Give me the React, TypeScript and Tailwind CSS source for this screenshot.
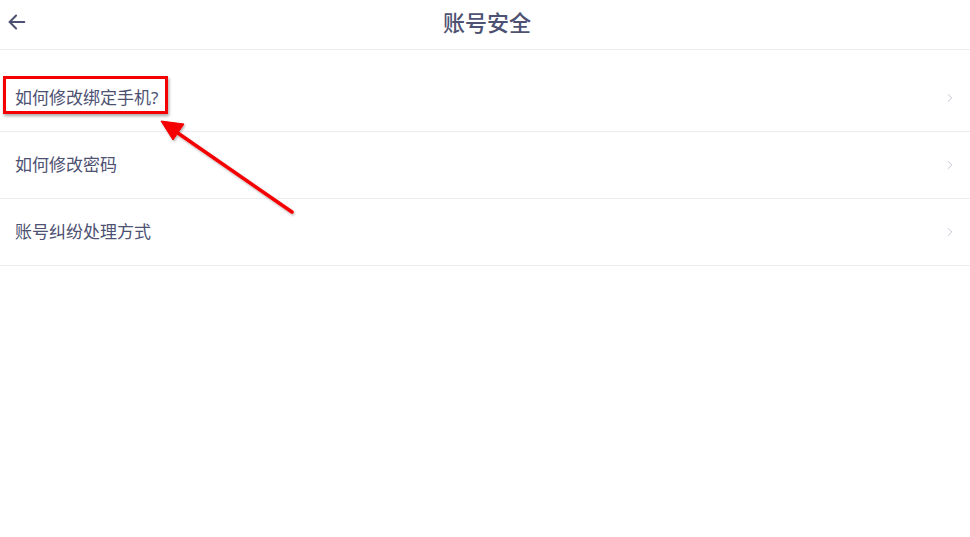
import { ChevronRight } from 'lucide-react';

const items = ['如何修改绑定手机?', '如何修改密码', '账号纠纷处理方式'];

export default function App() {
  return (
    <div
      className="relative w-[970px] h-[537px] bg-white overflow-hidden"
      style={{ fontFamily: '"Noto Sans", "Noto Sans CJK SC", sans-serif' }}
    >
      <header className="relative h-[50px] flex items-center justify-center pb-[5px] border-b border-[#ededf0]">
        <button className="absolute left-[6px] top-[11px] text-[#4d5172]">
          <svg width="22" height="22" viewBox="0 0 24 24" fill="none" stroke="currentColor" strokeWidth="2.2" strokeLinecap="round" strokeLinejoin="round">
            <path d="M20 12H4" />
            <path d="M11 5l-7 7 7 7" />
          </svg>
        </button>
        <h1 className="text-[22px] font-medium text-[#4d5172] pl-[4px]">账号安全</h1>
      </header>

      <ul className="mt-[15px]">
        {items.map((item) => (
          <li
            key={item}
            className="h-[67px] flex items-center justify-between pl-[15px] pr-[13px] border-b border-[#ededf0]"
          >
            <span className="text-[17px] text-[#4d5172]">{item}</span>
            <ChevronRight size={14} strokeWidth={1.5} className="text-[#b8bccb]" />
          </li>
        ))}
      </ul>

      {/* annotation */}
      <div className="absolute left-[3px] top-[76px] w-[165px] h-[38px] border-[3px] border-[#f40000] shadow-[1px_2px_3px_rgba(0,0,0,0.35)]" />
      <svg className="absolute left-0 top-0 pointer-events-none" width="970" height="537">
        <defs>
          <filter id="sh" x="-20%" y="-20%" width="140%" height="140%">
            <feDropShadow dx="1" dy="1.5" stdDeviation="1.2" floodColor="#000" floodOpacity="0.3" />
          </filter>
        </defs>
        <g filter="url(#sh)" fill="#f40000" stroke="#f40000">
          <line x1="292" y1="212" x2="172" y2="129" strokeWidth="3.5" strokeLinecap="round" />
          <polygon points="161,121 184,124 173,140" strokeWidth="1" strokeLinejoin="round" />
        </g>
      </svg>
    </div>
  );
}
